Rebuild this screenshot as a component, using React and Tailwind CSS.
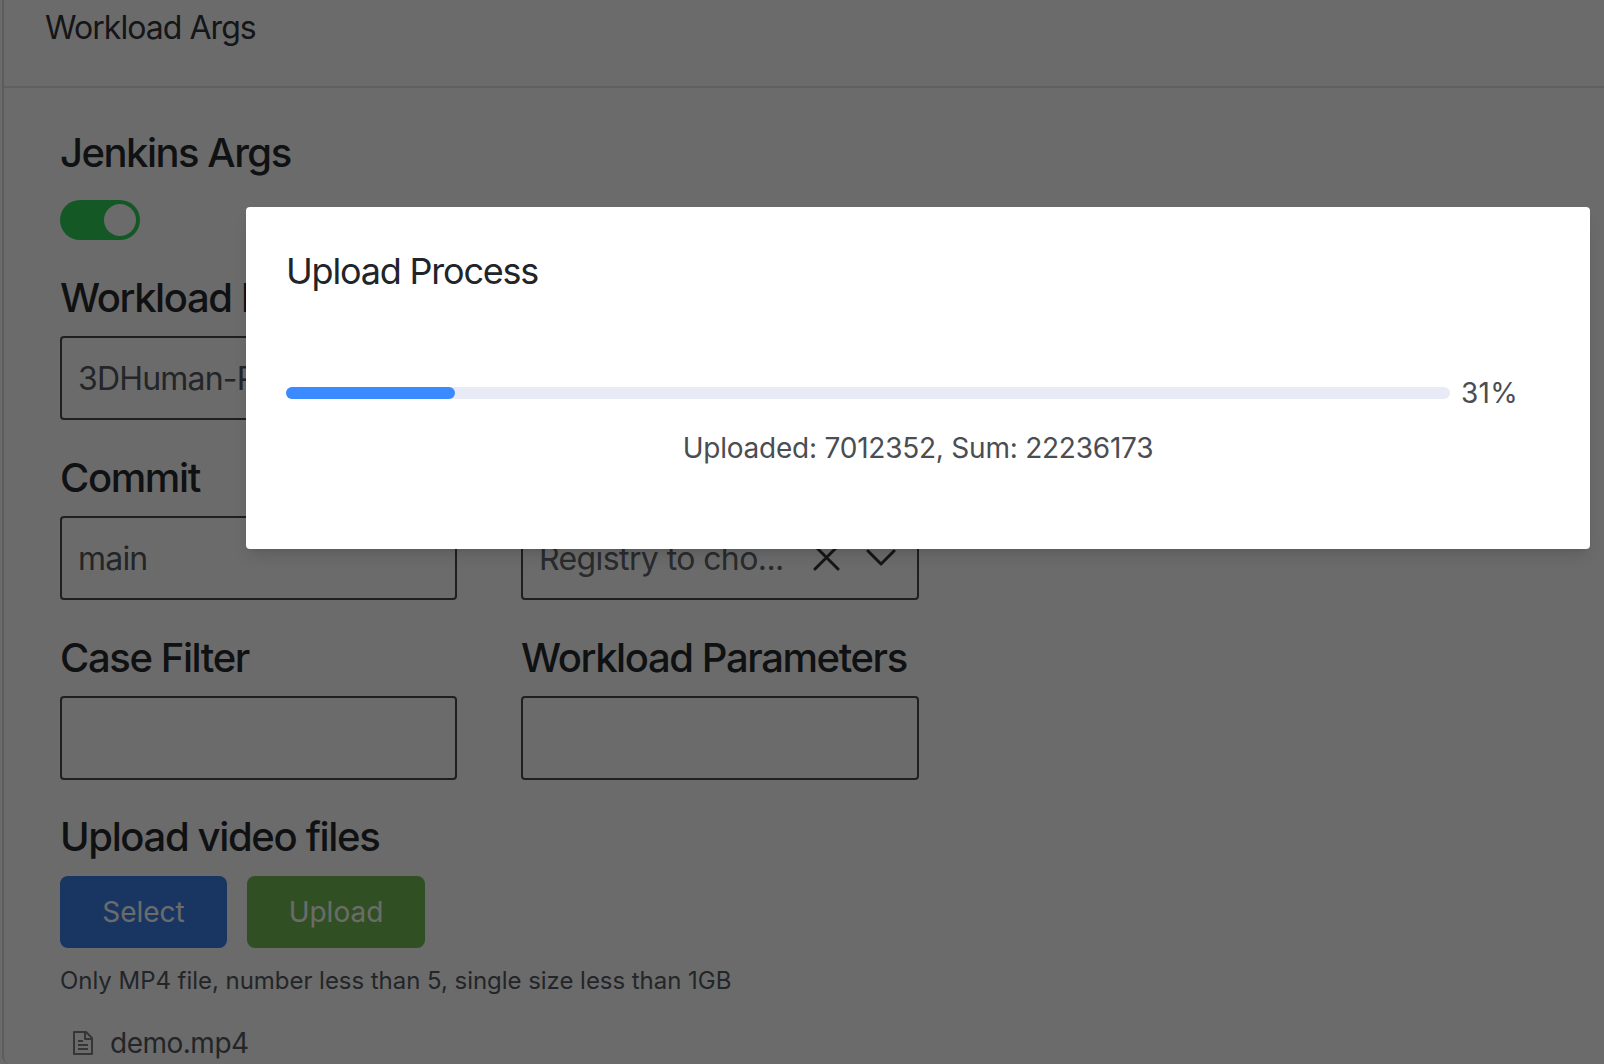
const FileIcon = () => (
  <svg width="22" height="26" viewBox="0 0 22 26" fill="none" stroke="#808080" strokeWidth="2" className="shrink-0">
    <path d="M2 2h12l6 6v16H2z" strokeLinejoin="round" />
    <path d="M13 2v7h7" strokeLinejoin="round" />
    <path d="M6 11h5M6 15h10M6 19h10" />
  </svg>
);

const ClearIcon = () => (
  <svg width="27" height="27" viewBox="0 0 27 27" fill="none" stroke="#33363a" strokeWidth="3" strokeLinecap="round" className="shrink-0 ml-[20px] -mt-[4px]">
    <path d="M2 2l23 23M25 2L2 25" />
  </svg>
);

const ArrowIcon = () => (
  <svg width="30" height="17" viewBox="0 0 30 17" fill="none" stroke="#33363a" strokeWidth="3" strokeLinecap="round" strokeLinejoin="round" className="shrink-0 ml-[26px] mr-[4px] -mt-[4px]">
    <path d="M2 2l13 13L28 2" />
  </svg>
);

const Field = ({ label, children }) => (
  <div className="h-[180px]">
    <div className="h-[60px] pt-[1px] text-[40px] leading-[42px] font-medium tracking-[-1.4px] text-[#282a2e] whitespace-nowrap">{label}</div>
    <div className="h-[84px] border-2 border-[#4a4a4a] rounded-[4px] flex items-center pt-[2px] pl-[16px] pr-[17px] text-[32px] tracking-[-0.8px] text-[#555a60]">
      {children}
    </div>
  </div>
);

const App = () => {
  return (
    <div className="relative h-[1064px] overflow-hidden bg-white font-['Inter',sans-serif]">
      <div className="h-[1064px] ml-[2px] border-l-2 border-[#dcdcdc] rounded-bl-lg">
        <div className="h-[88px] border-b-2 border-[#e4e4e4] pl-[41px] pt-[9px] text-[32px] leading-[38px] tracking-[-0.95px] text-[#33363a]">
          Workload Args
        </div>

        <div className="pl-[56px] pt-[40px]">
          <h2 className="text-[40px] leading-[50px] font-medium tracking-[-1.5px] text-[#282a2e]">Jenkins Args</h2>
          <div className="mt-[22px] w-[80px] h-[40px] rounded-full bg-[#30d158] p-[4px] flex justify-end">
            <div className="w-[32px] h-[32px] rounded-full bg-white" />
          </div>

          <div className="mt-[36px] grid grid-cols-[397px_398px] gap-x-[64px] w-[860px]">
            <Field label="Workload Name">3DHuman-Pose</Field>
            <Field label="Workload Image">
              <span className="truncate">3dhuman</span>
            </Field>
            <Field label="Commit">main</Field>
            <Field label="Registry">
              <span className="flex-1 min-w-0 whitespace-nowrap tracking-[-0.6px] text-[#62666c]">Registry to cho...</span>
              <ClearIcon />
              <ArrowIcon />
            </Field>
            <Field label="Case Filter" />
            <Field label="Workload Parameters" />
          </div>

          <h2 className="text-[40px] leading-[42px] font-medium tracking-[-1.35px] text-[#282a2e]">Upload video files</h2>
          <div className="mt-[18px] flex gap-[20px]">
            <button className="w-[167px] h-[72px] rounded-lg bg-[#3a80e8] text-white text-[28px]">Select</button>
            <button className="w-[178px] h-[72px] rounded-lg bg-[#72bd52] text-white text-[28px]">Upload</button>
          </div>
          <p className="mt-[18px] text-[24px] leading-[30px] tracking-[-0.04px] text-[#555a60]">
            Only MP4 file, number less than 5, single size less than 1GB
          </p>
          <div className="mt-[30px] ml-[12px] flex items-center gap-[16px] text-[28px] leading-[34px] tracking-[-0.5px] text-[#555a60]">
            <FileIcon />
            <span>demo.mp4</span>
          </div>
        </div>
      </div>

      {/* dialog */}
      <div className="absolute inset-0 bg-black/[0.58] pt-[207px] pl-[246px]">
        <div className="w-[1344px] h-[342px] bg-white rounded-[4px] shadow-lg p-[40px]">
          <div className="text-[36px] leading-[48px] tracking-[-1.2px] text-[#212529]">Upload Process</div>
          <div className="mt-[80px] flex items-center">
            <div className="w-[1164px] h-[12px] rounded-full bg-[#e8ebf5]">
              <div className="w-[169px] h-full rounded-full bg-[#3a8bff]" />
            </div>
            <span className="ml-[11px] text-[28px] leading-[36px] tracking-[0.3px] text-[#4a4d52]">31%</span>
          </div>
          <p className="mt-[19px] w-[1264px] text-center text-[28px] leading-[36px] tracking-[-0.23px] text-[#4a4d52]">
            Uploaded: 7012352, Sum: 22236173
          </p>
        </div>
      </div>
    </div>
  );
};

export default App;
